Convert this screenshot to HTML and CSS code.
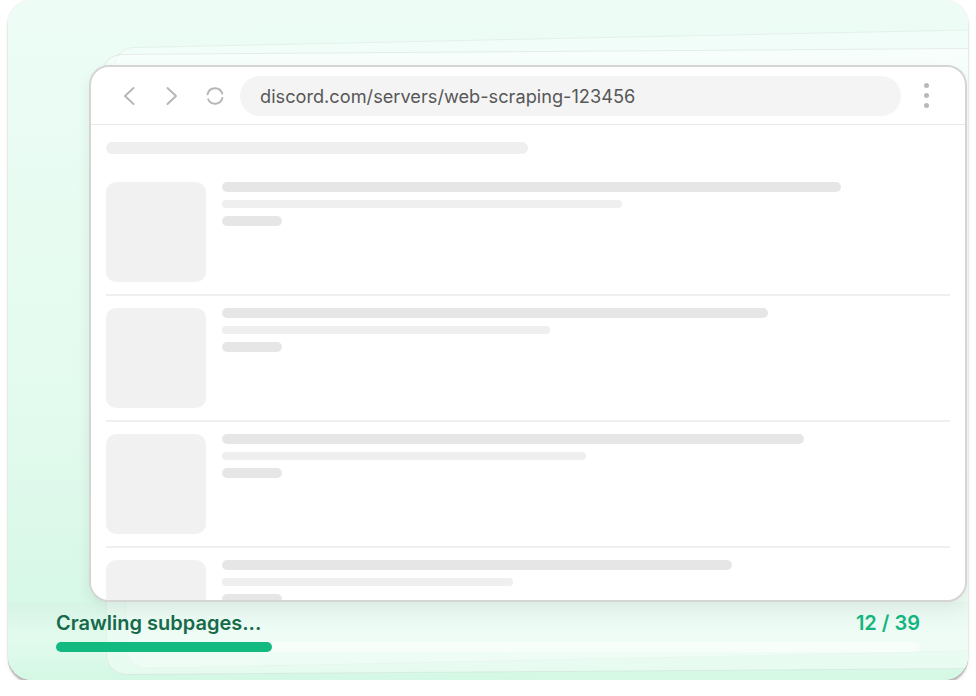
FILE: index.html
```html
<!DOCTYPE html>
<html lang="en">
<head>
<meta charset="utf-8">
<title>Crawling subpages</title>
<link rel="stylesheet" href="styles.css">
</head>
<body>
<div class="card">
  <div class="ghost ghost-back"></div>
  <div class="ghost ghost-mid"></div>
  <div class="stage">
    <div class="browser">
      <div class="toolbar">
        <div class="nav">
          <svg class="icon" viewBox="0 0 20 20" width="20" height="20"><path d="M14.5 2 L6 10 L14.5 18" fill="none" stroke="#b7b7b7" stroke-width="2" stroke-linecap="round" stroke-linejoin="round"/></svg>
          <svg class="icon" viewBox="0 0 20 20" width="20" height="20"><path d="M5.5 2 L14 10 L5.5 18" fill="none" stroke="#b7b7b7" stroke-width="2" stroke-linecap="round" stroke-linejoin="round"/></svg>
          <svg class="icon" viewBox="0 0 20 20" width="20" height="20"><path d="M2.6 8.2 A7.6 7.6 0 0 1 17.3 7.6" fill="none" stroke="#b7b7b7" stroke-width="2" stroke-linecap="round"/><path d="M17.4 12 A7.6 7.6 0 0 1 3.2 13.4" fill="none" stroke="#b7b7b7" stroke-width="2" stroke-linecap="round"/></svg>
        </div>
        <div class="url">discord.com/servers/web-scraping-123456</div>
        <div class="kebab"><span></span><span></span><span></span></div>
      </div>
      <div class="content">
        <div class="title-sk"></div>
        <div class="list">
          <div class="row">
            <div class="thumb"></div>
            <div class="lines">
              <div class="l1 w85"></div>
              <div class="l2 w55"></div>
              <div class="l3"></div>
            </div>
          </div>
          <div class="row">
            <div class="thumb"></div>
            <div class="lines">
              <div class="l1 w75"></div>
              <div class="l2 w45"></div>
              <div class="l3"></div>
            </div>
          </div>
          <div class="row">
            <div class="thumb"></div>
            <div class="lines">
              <div class="l1 w80"></div>
              <div class="l2 w50"></div>
              <div class="l3"></div>
            </div>
          </div>
          <div class="row">
            <div class="thumb"></div>
            <div class="lines">
              <div class="l1 w70"></div>
              <div class="l2 w40"></div>
              <div class="l3"></div>
            </div>
          </div>
        </div>
      </div>
    </div>
  </div>
  <div class="fade"></div>
  <div class="footer">
    <div class="status">
      <span class="label">Crawling subpages...</span>
      <span class="count">12 / 39</span>
    </div>
    <div class="track"><div class="fill"></div></div>
  </div>
</div>
</body>
</html>
```
FILE: styles.css
```css
* { box-sizing: border-box; }
html, body { margin: 0; padding: 0; background: #ffffff; }
body { font-family: Inter, "Noto Sans", "Liberation Sans", sans-serif; }

.card {
  position: relative;
  width: 960px;
  height: 680px;
  margin-left: 8px;
  border-radius: 24px;
  overflow: hidden;
  background: linear-gradient(180deg, #edfdf6 0%, #e3faee 60%, #d3f8e4 100%);
  box-shadow: 0 3px 1px rgba(0,0,0,0.2), 0 4px 4px rgba(0,0,0,0.08), 0 0 2px rgba(0,0,0,0.14);
}

.ghost {
  position: absolute;
  border-radius: 20px;
}
.ghost-back {
  left: 112px; top: 38px; right: -40px; bottom: 20px;
  background: rgba(255,255,255,0.28);
  border: 1px solid rgba(0,0,0,0.05);
  transform: rotate(-1.2deg);
}
.ghost-mid {
  left: 96px; top: 51px; right: -20px; bottom: 8px;
  background: rgba(255,255,255,0.42);
  border: 1px solid rgba(0,0,0,0.07);
  transform: rotate(-0.4deg);
}

.stage {
  position: relative;
  padding: 65px 1px 0 81px;
}

.browser {
  height: 537px;
  background: #ffffff;
  border: 2px solid #d5d5d5;
  border-radius: 20px;
  overflow: hidden;
  box-shadow: 0 6px 14px rgba(0,0,0,0.07);
}

.toolbar {
  height: 58px;
  display: flex;
  align-items: center;
  gap: 15px;
  padding: 0 36px 0 28px;
  border-bottom: 1px solid #e9e9e9;
}
.nav { display: flex; gap: 23px; align-items: center; }
.icon { display: block; }
.url {
  flex: 1;
  height: 40px;
  border-radius: 20px;
  background: #f4f4f4;
  padding-left: 20px;
  display: flex;
  align-items: center;
  font-size: 18.2px;
  color: #575757;
}
.kebab {
  margin-left: 8px;
  display: flex;
  flex-direction: column;
  gap: 5px;
}
.kebab span {
  width: 5px; height: 5px; border-radius: 50%;
  background: #b9b9b9;
}

.content { padding: 17px 15px 0 15px; }
.title-sk {
  width: 422px; height: 12px; border-radius: 6px;
  background: #efefef;
}
.list { margin-top: 16px; }
.row {
  display: flex;
  gap: 16px;
  padding: 12px 0;
  border-bottom: 2px solid #efefef;
}
.thumb {
  width: 100px; height: 100px; border-radius: 10px;
  background: #f1f1f1;
  flex: none;
}
.lines { flex: 1; display: flex; flex-direction: column; }
.l1 { height: 10px; border-radius: 5px; background: #e6e6e6; }
.l2 { height: 8px; border-radius: 4px; background: #efefef; margin-top: 8px; }
.l3 { width: 60px; height: 10px; border-radius: 5px; background: #e6e6e6; margin-top: 8px; }
.w85 { width: 85%; }
.w80 { width: 80%; }
.w75 { width: 75%; }
.w70 { width: 70%; }
.w55 { width: 55%; }
.w50 { width: 50%; }
.w45 { width: 45%; }
.w40 { width: 40%; }

.fade {
  position: absolute;
  left: 0; right: 0; bottom: 0;
  height: 78px;
  background: linear-gradient(180deg,
    rgba(214,236,227,0.35) 0%,
    rgba(240,253,247,0.45) 45%,
    rgba(240,253,247,0.25) 75%,
    rgba(209,247,227,0) 100%);
}

.footer {
  position: relative;
  padding: 10px 48px 0 48px;
}
.status {
  display: flex;
  justify-content: space-between;
  align-items: baseline;
  height: 22px;
  line-height: 22px;
  font-size: 20px;
  font-weight: 600;
}
.label { color: #17694b; }
.count { color: #12b57f; }
.track {
  margin-top: 8px;
  height: 10px;
  border-radius: 5px;
  background: rgba(255,255,255,0.5);
}
.fill {
  width: 25%;
  height: 100%;
  border-radius: 5px;
  background: #12b981;
}
```
